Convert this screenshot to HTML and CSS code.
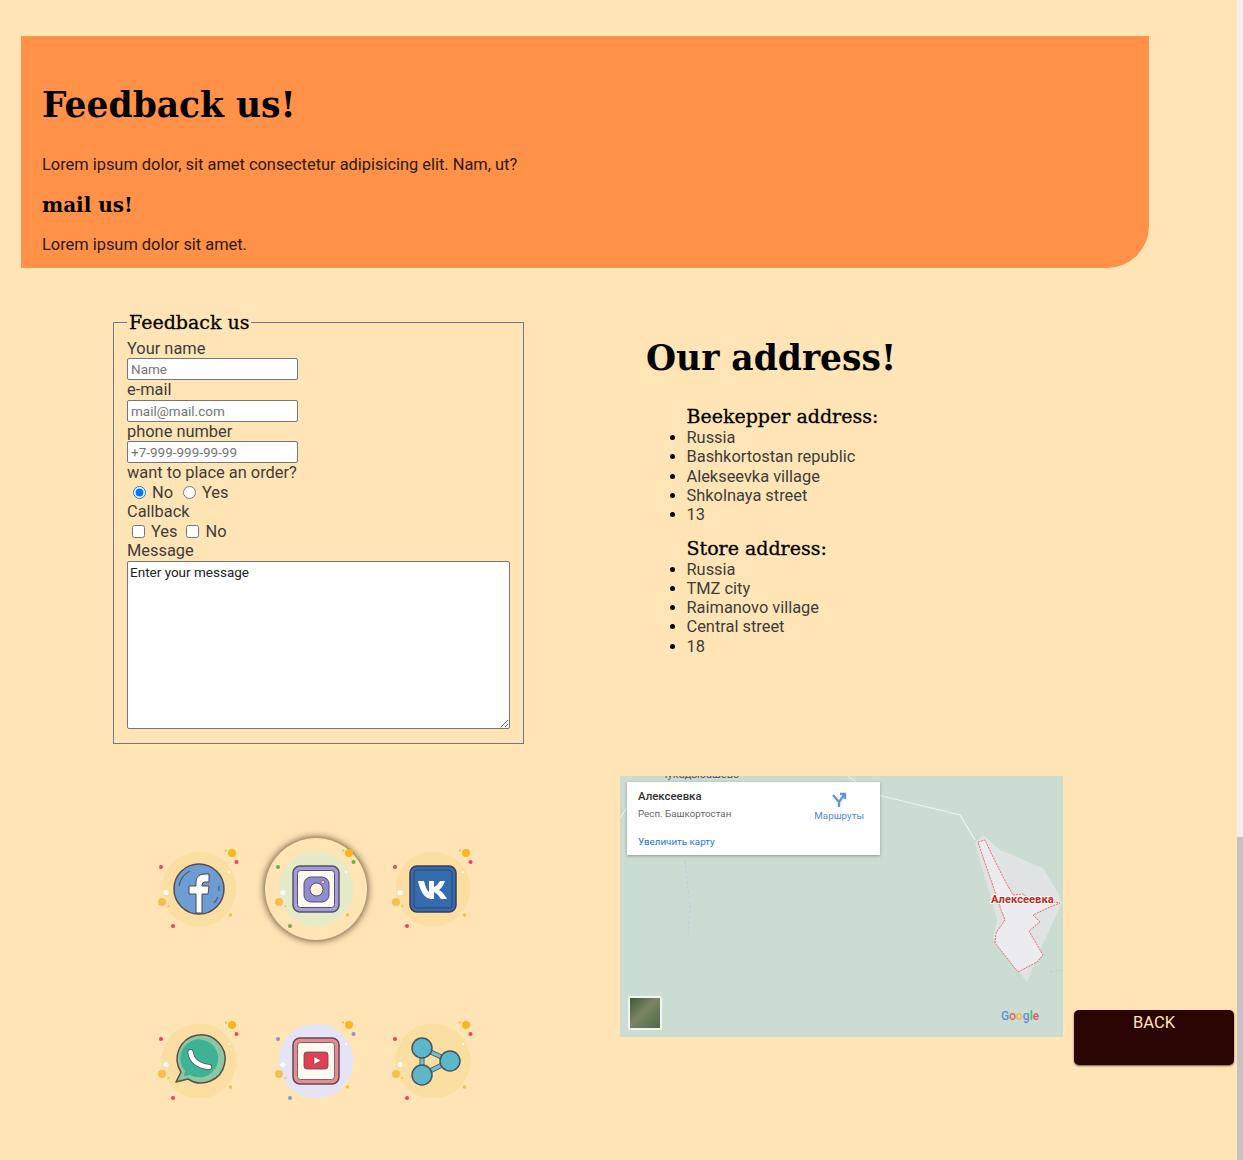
FILE: index.html
```html
<!DOCTYPE html>
<html lang="en">
<head>
    <meta charset="UTF-8">
    <meta name="viewport" content="width=device-width, initial-scale=1.0">
    <title>Feedback us</title>
    <link rel="stylesheet" href="styles.css">
</head>
<body>
    <svg class="sprites" width="0" height="0" aria-hidden="true">
        <defs>
            <symbol id="deco" viewBox="-45 -45 90 90">
                <circle class="deco-bg" cx="0" cy="0" r="37.5"/>
                <circle class="deco-sun" cx="33" cy="-36" r="4"/>
                <circle class="deco-sun" cx="27" cy="-38.500" r="1"/>
                <circle class="deco-dot" cx="37.500" cy="-27" r="2"/>
                <circle class="deco-dot" cx="-38" cy="-22" r="2"/>
                <circle class="deco-white" cx="30" cy="-17" r="1"/>
                <circle class="deco-white" cx="-33" cy="3.500" r="2.500"/>
                <circle class="deco-sun-soft" cx="-37" cy="13" r="4"/>
                <circle class="deco-sun-soft" cx="-30.500" cy="17" r="1"/>
                <circle class="deco-sun-soft" cx="31.500" cy="26" r="1.800"/>
                <circle class="deco-dot" cx="-26" cy="37" r="2"/>
            </symbol>
        </defs>
    </svg>

    <main class="page">
        <section class="banner">
            <h1>Feedback us!</h1>
            <p>Lorem ipsum dolor, sit amet consectetur adipisicing elit. Nam, ut?</p>
            <h3>mail us!</h3>
            <p>Lorem ipsum dolor sit amet.</p>
        </section>

        <div class="contact-row">
            <form class="feedback-form">
                <fieldset>
                    <legend>Feedback us</legend>
                    <label for="name">Your name</label>
                    <input type="text" id="name" placeholder="Name">
                    <label for="email">e-mail</label>
                    <input type="text" id="email" placeholder="mail@mail.com">
                    <label for="phone">phone number</label>
                    <input type="text" id="phone" placeholder="+7-999-999-99-99">
                    <span class="form-label">want to place an order?</span>
                    <div class="choices">
                        <input type="radio" name="order" id="order-no" checked>
                        <label for="order-no">No</label>
                        <input type="radio" name="order" id="order-yes">
                        <label for="order-yes">Yes</label>
                    </div>
                    <span class="form-label">Callback</span>
                    <div class="choices checks">
                        <input type="checkbox" id="call-yes">
                        <label for="call-yes">Yes</label>
                        <input type="checkbox" id="call-no">
                        <label for="call-no">No</label>
                    </div>
                    <label for="message">Message</label>
                    <textarea id="message" placeholder="Enter your message"></textarea>
                </fieldset>
            </form>

            <section class="address">
                <h2>Our address!</h2>
                <ul>
                    <li class="list-title">Beekepper address:</li>
                    <li>Russia</li>
                    <li>Bashkortostan republic</li>
                    <li>Alekseevka village</li>
                    <li>Shkolnaya street</li>
                    <li>13</li>
                </ul>
                <ul>
                    <li class="list-title">Store address:</li>
                    <li>Russia</li>
                    <li>TMZ city</li>
                    <li>Raimanovo village</li>
                    <li>Central street</li>
                    <li>18</li>
                </ul>
            </section>
        </div>

        <div class="bottom-row">
            <div class="socials">
                <a href="#" class="social yellow">
                    <svg viewBox="-45 -45 90 90">
                        <use href="#deco" x="-45" y="-45" width="90" height="90"/>
                        <circle cx="0" cy="0" r="25" fill="#6d9dd3" stroke="#5b4a52" stroke-width="1.500"/>
                        <path d="M-20 -3 A20 20 0 0 1 -9 -18 M19 8 A20 20 0 0 1 15 14 M20 2 V-3" fill="none" stroke="#4f5f80" stroke-width="1.300"/>
                        <path d="M-3 24 V5 H-10 V-3 H-3 V-7 Q-3 -15 6 -15 H10 V-7 H6 Q3 -7 3 -4 V-3 H10 L9 5 H3 V24 Z" fill="#fff" stroke="#4d4650" stroke-width="1"/>
                    </svg>
                </a>
                <a href="#" class="social green active">
                    <svg viewBox="-45 -45 90 90">
                        <use href="#deco" x="-45" y="-45" width="90" height="90"/>
                        <rect x="-23" y="-23" width="46" height="46" rx="7" fill="#a29ed8" stroke="#5b5068" stroke-width="1.500"/>
                        <rect x="-18.500" y="-18.500" width="37" height="37" rx="3" fill="#fdfbf1" stroke="#5b5068" stroke-width="1"/>
                        <rect x="-12" y="-12" width="25" height="25" rx="7" fill="#8f8cd2" stroke="#5b5068" stroke-width="1"/>
                        <circle cx="0.500" cy="0.500" r="6.500" fill="#fdf3dc" stroke="#5b5068" stroke-width="1"/>
                        <circle cx="7" cy="-7" r="1.800" fill="#f3c6cf" stroke="#5b5068" stroke-width=".6"/>
                    </svg>
                </a>
                <a href="#" class="social yellow">
                    <svg viewBox="-45 -45 90 90">
                        <use href="#deco" x="-45" y="-45" width="90" height="90"/>
                        <rect x="-23" y="-23" width="46" height="46" rx="7" fill="#356cae" stroke="#3d3d50" stroke-width="1.500"/>
                        <rect x="-19" y="-19" width="38" height="38" rx="3" fill="none" stroke="#2a3d68" stroke-width=".8"/>
                        <path d="M-15 -8 H-9 Q-7 1 -4 3 V-8 H1 V-2 Q4 -3 7 -8 H12 Q10 -2 6 1 Q10 3 14 10 H8 Q5 5 1 3 V10 H-1 Q-11 10 -15 -8 Z" fill="#fff"/>
                    </svg>
                </a>
                <a href="#" class="social yellow">
                    <svg viewBox="-45 -45 90 90">
                        <use href="#deco" x="-45" y="-45" width="90" height="90"/>
                        <path d="M-23 21 L-18 11 A24 24 0 1 1 -11 18 Z" fill="#8cc7a2" stroke="#5c5048" stroke-width="1.500" stroke-linejoin="round"/>
                        <path d="M-15 15 L-14 10 A19 19 0 1 1 -9 14 Z" fill="#3db294"/>
                        <path d="M-8.500 -9 Q-7 4 10 6" fill="none" stroke="#4d4650" stroke-width="6" stroke-linecap="round"/>
                        <path d="M-8.500 -9 Q-7 4 10 6" fill="none" stroke="#fff" stroke-width="4.600" stroke-linecap="round"/>
                    </svg>
                </a>
                <a href="#" class="social lavender">
                    <svg viewBox="-45 -45 90 90">
                        <use href="#deco" x="-45" y="-45" width="90" height="90"/>
                        <rect x="-23" y="-23" width="46" height="46" rx="7" fill="#e98b91" stroke="#5b4a58" stroke-width="1.500"/>
                        <rect x="-18.500" y="-18.500" width="37" height="37" rx="3" fill="#fdfbf1" stroke="#5b4a58" stroke-width=".8"/>
                        <rect x="-12" y="-9" width="24" height="17" rx="3" fill="#e23e55" stroke="#5b4a58" stroke-width=".8"/>
                        <path d="M-2 -4.500 L5 -.500 L-2 3.500 Z" fill="#fdfbf1" stroke="#5b4a58" stroke-width=".6"/>
                    </svg>
                </a>
                <a href="#" class="social yellow">
                    <svg viewBox="-45 -45 90 90">
                        <use href="#deco" x="-45" y="-45" width="90" height="90"/>
                        <path d="M-11 -13 V14 L17 0 Z" fill="none" stroke="#46555c" stroke-width="5" stroke-linejoin="round"/>
                        <path d="M-11 -13 V14 L17 0 Z" fill="none" stroke="#6fbdd2" stroke-width="3.400" stroke-linejoin="round"/>
                        <circle cx="-11" cy="-13" r="10" fill="#5db7cb" stroke="#46555c" stroke-width="1.500"/>
                        <circle cx="-11" cy="14" r="10" fill="#5db7cb" stroke="#46555c" stroke-width="1.500"/>
                        <circle cx="17" cy="0" r="10" fill="#5db7cb" stroke="#46555c" stroke-width="1.500"/>
                    </svg>
                </a>
            </div>

            <div class="map">
                <svg class="map-canvas" viewBox="0 0 443 261">
                    <polygon points="355,67 363,59 380,74 423,92 438,117 442,127 420,174 407,206 373,162 377,144" fill="#dfe3e3"/>
                    <polygon points="358,66 365,64 373,81 383,101 393,119 403,118 408,122 440,127 430,131 413,139 420,146 409,155 423,179 417,186 398,196 375,167 376,157 385,144 380,131 372,107 365,87" fill="#ebebf0" stroke="#ee6a62" stroke-width="1" stroke-dasharray="2 1"/>
                    <path d="M258 19 L340 39 L355 64" fill="none" stroke="#eef2ef" stroke-width="1.200"/>
                    <path d="M0 42 L8 30 M228 0 L236 6" fill="none" stroke="#eef2ef" stroke-width="1"/>
                    <path d="M65 85 L70 130 L68 160 M430 196 L443 194" fill="none" stroke="#b5cfe0" stroke-width="1" stroke-dasharray="3 2"/>
                    <text class="map-town-top" x="40" y="2">Чукадыбашево</text>
                    <text class="map-town" x="371" y="127">Алексеевка</text>
                </svg>
                <div class="map-card">
                    <div class="map-place">
                        <b>Алексеевка</b>
                        <span>Респ. Башкортостан</span>
                        <a href="#">Увеличить карту</a>
                    </div>
                    <a href="#" class="map-route">
                        <svg viewBox="0 0 16 16" width="16" height="16">
                            <path d="M8 15 V10 L2 3 M8 10 L13 3 M9 2 H14 V7" fill="none" stroke="#5f96e0" stroke-width="2.400"/>
                        </svg>
                        Маршруты
                    </a>
                </div>
                <div class="map-thumb"></div>
                <div class="map-logo"><span class="g-blue">G</span><span class="g-red">o</span><span class="g-yellow">o</span><span class="g-blue">g</span><span class="g-green">l</span><span class="g-red">e</span></div>
            </div>

            <a href="#" class="back-btn">BACK</a>
        </div>
    </main>

    <div class="scrollbar"><div class="scrollbar-thumb"></div></div>
</body>
</html>
```

FILE: styles.css
```css
/* General Reset */
* {
    margin: 0;
    padding: 0;
    box-sizing: border-box;
}

body {
    font-family: Roboto, sans-serif;
    font-size: 16.400px;
    color: #3d3d3d;
    background: #ffe4b5;
    display: flex;
    height: 1160px;
    overflow: hidden;
}

.sprites {
    position: absolute;
}

.page {
    flex: 1;
    padding-top: 36px;
}

.scrollbar {
    width: 6px;
    background: #f1f1f4;
    padding-top: 837px;
}

.scrollbar-thumb {
    height: 323px;
    background: #c4c4c4;
}

h1, h2, h3, legend, .list-title {
    font-family: "DejaVu Serif", serif;
    color: #000;
}

legend, .list-title {
    -webkit-text-stroke: 0.3px #000;
}

/* Banner */
.banner {
    margin-left: 21px;
    width: 1128px;
    height: 232px;
    padding: 48px 21px 0;
    background: #ff9148;
    border-bottom-right-radius: 42px;
}

.banner h1 {
    font-size: 34.500px;
    line-height: 42px;
    margin-bottom: 29px;
}

.banner h3 {
    font-size: 20px;
    line-height: 26px;
    margin: 18px 0 17px;
}

.banner p {
    line-height: 19px;
    color: #2b1a10;
}

/* Form and address */
.contact-row {
    display: flex;
    padding: 44px 0 0 113px;
    height: 508px;
}

.feedback-form {
    width: 411px;
    margin-right: 122px;
}

fieldset {
    display: flex;
    flex-direction: column;
    align-items: flex-start;
    height: 432px;
    padding: 6.500px 13px 0;
    border: 1px solid #6a7a90;
}

legend {
    font-size: 19px;
    line-height: 20px;
    padding: 0 2px;
}

fieldset > label,
.form-label {
    line-height: 19.500px;
}

input[type="text"] {
    width: 171px;
    height: 22px;
    padding: 0 3px;
    font-family: Roboto, sans-serif;
    font-size: 13.500px;
    background: #fff;
    border: 1px solid #767676;
    border-radius: 2px;
}

.choices {
    display: flex;
    align-items: center;
    height: 19.500px;
}

.choices input {
    width: 13px;
    height: 13px;
    margin: 0 6px 0 6px;
}

.choices label {
    margin-right: 4px;
}

.checks input {
    margin: 0 6px 0 5px;
}

textarea {
    width: 383px;
    height: 168px;
    padding: 2px;
    font-family: Roboto, sans-serif;
    font-size: 13.500px;
    background: #fff;
    border: 1px solid #767676;
    border-radius: 2px;
}

textarea::placeholder {
    color: #222;
}

.address h2 {
    font-size: 34.500px;
    line-height: 42px;
    margin: 25px 0 29px;
}

.address ul {
    margin-left: 40.500px;
    margin-bottom: 15.250px;
    line-height: 19.250px;
}

.address li::marker {
    color: #000;
}

.list-title {
    list-style: none;
    font-size: 19px;
    line-height: 17px;
    margin-bottom: 3px;
}

/* Social icons */
.bottom-row {
    display: flex;
    align-items: flex-start;
}

.socials {
    display: grid;
    grid-template-columns: repeat(3, 117px);
    grid-auto-rows: 172px;
    width: 351px;
    margin: 27px 128.500px 0 140.500px;
}

.social {
    display: flex;
    align-items: center;
    justify-content: center;
}

.social svg {
    width: 90px;
    height: 90px;
    overflow: visible;
}

.social.active {
    width: 102px;
    height: 102px;
    margin: auto;
    border-radius: 50%;
    box-shadow: 0 0 7px 1px rgba(40, 30, 10, 0.7);
}

.yellow {
    --bg: #fbdfa2;
    --dot: #f0405f;
}

.green {
    --bg: #e5ebc6;
    --dot: #6fae3e;
}

.lavender {
    --bg: #e6e3f4;
    --dot: #8d93c8;
}

.deco-bg {
    fill: var(--bg);
}

.deco-dot {
    fill: var(--dot);
}

.deco-sun {
    fill: #f7b71d;
}

.deco-sun-soft {
    fill: #f3c050;
}

.deco-white {
    fill: #fff;
}

/* Map */
.map {
    position: relative;
    flex-shrink: 0;
    width: 443px;
    height: 261px;
    background: #cbddd3;
    overflow: hidden;
}

.map-canvas {
    display: block;
    width: 443px;
    height: 261px;
}

.map-town-top {
    font-size: 11px;
    fill: #555;
}

.map-town {
    font-size: 11.200px;
    font-weight: 700;
    fill: #c5281c;
    stroke: #fff;
    stroke-width: 2px;
    paint-order: stroke;
}

.map-card {
    position: absolute;
    top: 6px;
    left: 7px;
    display: flex;
    justify-content: space-between;
    width: 253px;
    height: 73px;
    padding: 8px 16px 0 11px;
    background: #fff;
    box-shadow: 0 1px 3px rgba(0, 0, 0, 0.3);
}

.map-place {
    display: flex;
    flex-direction: column;
    font-size: 9.800px;
    color: #666;
}

.map-place b {
    font-size: 11.400px;
    font-weight: 500;
    color: #333;
    line-height: 13px;
    margin-bottom: 5px;
}

.map-place a {
    color: #1a73e8;
    margin-top: 17px;
    text-decoration: none;
}

.map-route {
    display: flex;
    flex-direction: column;
    align-items: center;
    gap: 2px;
    font-size: 9.800px;
    color: #4a8ae0;
    text-decoration: none;
    padding-top: 2px;
}

.map-thumb {
    position: absolute;
    left: 8px;
    top: 220px;
    width: 34px;
    height: 34px;
    background: linear-gradient(135deg, #3d5a3a 0%, #7a8462 45%, #4f6a4a 100%);
    border: 2px solid #f4f4f4;
    border-radius: 2px;
}

.map-logo {
    position: absolute;
    left: 381px;
    top: 233px;
    font-size: 12px;
    font-weight: 500;
}

.g-blue { color: #5a8fe0; }
.g-red { color: #e0645a; }
.g-yellow { color: #eebc3c; }
.g-green { color: #5bb070; }

/* Back button */
.back-btn {
    display: block;
    width: 160px;
    height: 55px;
    margin: 234px 0 0 11px;
    padding-top: 3px;
    font-size: 16.500px;
    line-height: 19px;
    text-align: center;
    text-decoration: none;
    color: #ffe4b5;
    background: #2a0402;
    border-radius: 5px;
    box-shadow: 0 1px 2px rgba(0, 0, 0, 0.6);
}
```
